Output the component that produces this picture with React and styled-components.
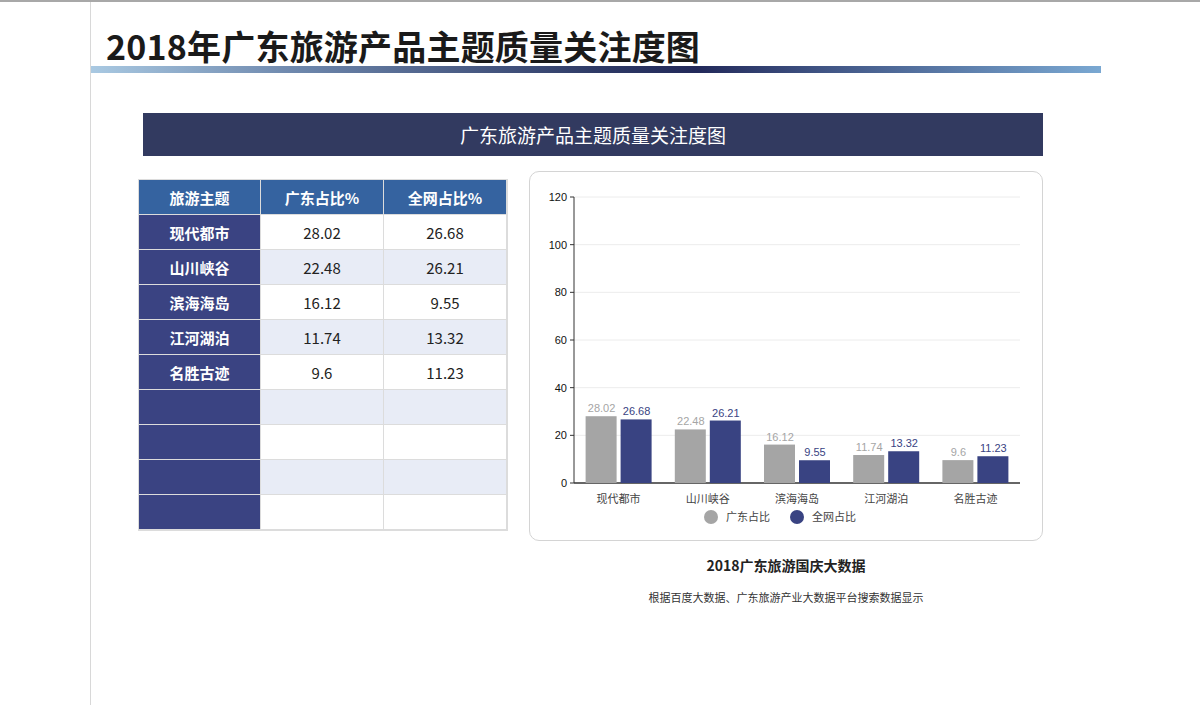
import React from 'react';
import styled, { createGlobalStyle } from 'styled-components';

const Global = createGlobalStyle`
  html, body { margin: 0; padding: 0; background: #fff; }
  body { font-family: "Noto Sans CJK SC", "Noto Sans", sans-serif; }
`;

const Page = styled.div`
  width: 1200px;
  height: 705px;
  border-top: 2px solid #a8a8a8;
  box-sizing: border-box;
  position: relative;
  overflow: hidden;
`;

const Sheet = styled.div`
  margin-left: 90px;
  width: 1010px;
  height: 703px;
  border-left: 1px solid #d8d8d8;
`;

const Title = styled.h1`
  margin: 0;
  padding: 24px 0 0 15px;
  height: 40px;
  font-size: 34px;
  line-height: 40px;
  font-weight: 700;
  color: #1a1a1a;
  letter-spacing: 0.2px;
`;

const Rule = styled.div`
  height: 7px;
  background: linear-gradient(90deg, #a9c9e2 0%, #6e88ad 20%, #2e3a66 50%, #22295a 60%, #3f5383 72%, #7aa8d2 100%);
`;

const Body = styled.div`
  padding: 40px 0 0 52px;
`;

const Banner = styled.div`
  width: 900px;
  height: 43px;
  background: #323a60;
  color: #fff;
  font-size: 19px;
  display: flex;
  align-items: center;
  justify-content: center;
`;

const Row = styled.div`
  display: flex;
  gap: 21px;
  margin-top: 15px;
  margin-left: -5px;
`;

const Table = styled.div`
  margin-top: 8px;
  display: grid;
  grid-template-columns: 122px 123px 123px;
  grid-auto-rows: 35px;
  border: 1px solid #dcdcdc;
  align-self: flex-start;
`;

const Cell = styled.div`
  display: flex;
  align-items: center;
  justify-content: center;
  font-size: 15px;
  border-right: 1px solid #dcdcdc;
  border-bottom: 1px solid #dcdcdc;
  background: ${p => (p.$head ? '#3563a0' : p.$lead ? '#3a4382' : p.$alt ? '#e8ecf6' : '#fff')};
  color: ${p => (p.$head || p.$lead ? '#fff' : '#222')};
  font-weight: ${p => (p.$head || p.$lead ? 700 : 400)};
`;

const Side = styled.div`
  display: flex;
  flex-direction: column;
  align-items: center;
`;

const Card = styled.div`
  width: 512px;
  height: 368px;
  border: 1px solid #d4d4d4;
  border-radius: 10px;
`;

const Caption = styled.div`
  margin-top: 14px;
  font-size: 14px;
  font-weight: 700;
  color: #222;
`;

const Note = styled.div`
  margin-top: 14px;
  font-size: 11px;
  color: #333;
`;

const data = [
  ['现代都市', 28.02, 26.68],
  ['山川峡谷', 22.48, 26.21],
  ['滨海海岛', 16.12, 9.55],
  ['江河湖泊', 11.74, 13.32],
  ['名胜古迹', 9.6, 11.23],
];

function Chart() {
  const x0 = 44, base = 311, top = 25, right = 490;
  const h = base - top;
  const y = v => base - (v / 120) * h;
  const step = (right - x0) / 5;
  return (
    <svg width="512" height="368" style={{ display: 'block' }}>
      {[0, 20, 40, 60, 80, 100, 120].map(t => (
        <g key={t}>
          {t > 0 && <line x1={x0} x2={right} y1={y(t)} y2={y(t)} stroke="#ececec" />}
          <line x1={x0 - 4} x2={x0} y1={y(t)} y2={y(t)} stroke="#333" />
          <text x={x0 - 7} y={y(t) + 4} fontSize="11" textAnchor="end" fill="#111" fontFamily="Liberation Sans, sans-serif">{t}</text>
        </g>
      ))}
      <line x1={x0} x2={x0} y1={top} y2={base} stroke="#333" />
      <line x1={x0} x2={right} y1={base} y2={base} stroke="#333" strokeWidth="1.5" />
      {data.map(([name, a, b], i) => {
        const cx = x0 + step * i + step / 2;
        return (
          <g key={name}>
            <rect x={cx - 33} y={y(a)} width="31" height={base - y(a)} fill="#a5a5a5" />
            <rect x={cx + 2} y={y(b)} width="31" height={base - y(b)} fill="#394382" />
            <text x={cx - 17} y={y(a) - 4} fontSize="11" textAnchor="middle" fill="#a5a5a5" fontFamily="Liberation Sans, sans-serif">{a}</text>
            <text x={cx + 18} y={y(b) - 4} fontSize="11" textAnchor="middle" fill="#394382" fontFamily="Liberation Sans, sans-serif">{b}</text>
            <text x={cx} y={base + 20} fontSize="11" textAnchor="middle" fill="#444" fontFamily="Noto Sans CJK SC, serif">{name}</text>
          </g>
        );
      })}
      <circle cx="181" cy="345" r="7" fill="#a5a5a5" />
      <text x="196" y="349" fontSize="11" fill="#444">广东占比</text>
      <circle cx="267" cy="345" r="7" fill="#394382" />
      <text x="282" y="349" fontSize="11" fill="#444">全网占比</text>
    </svg>
  );
}

export default function App() {
  return (
    <Page>
      <Global />
      <Sheet>
        <Title>2018年广东旅游产品主题质量关注度图</Title>
        <Rule />
        <Body>
          <Banner>广东旅游产品主题质量关注度图</Banner>
          <Row>
            <Table>
              <Cell $head>旅游主题</Cell>
              <Cell $head>广东占比%</Cell>
              <Cell $head>全网占比%</Cell>
              {[...data, ...Array(4).fill(['', '', ''])].map((r, i) => (
                <React.Fragment key={i}>
                  <Cell $lead>{r[0]}</Cell>
                  <Cell $alt={i % 2 === 1}>{r[1]}</Cell>
                  <Cell $alt={i % 2 === 1}>{r[2]}</Cell>
                </React.Fragment>
              ))}
            </Table>
            <Side>
              <Card><Chart /></Card>
              <Caption>2018广东旅游国庆大数据</Caption>
              <Note>根据百度大数据、广东旅游产业大数据平台搜索数据显示</Note>
            </Side>
          </Row>
        </Body>
      </Sheet>
    </Page>
  );
}
